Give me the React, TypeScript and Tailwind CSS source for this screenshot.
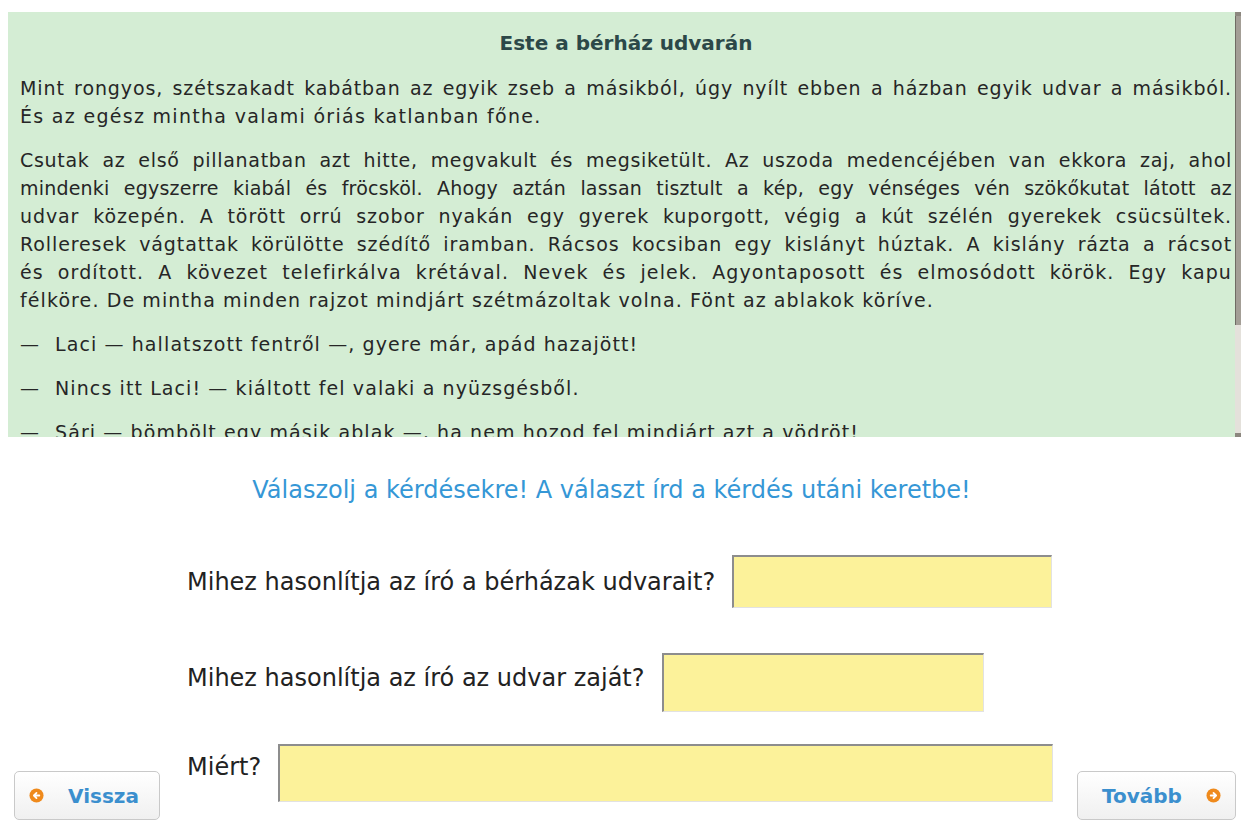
import React from "react";

// each justified line gets its own tracking so the word spacing stays close to the page
const para1 = [
  { t: "Mint rongyos, szétszakadt kabátban az egyik zseb a másikból, úgy nyílt ebben a házban egyik udvar a másikból.", k: "tracking-[0.9px]" },
];
const para1Last = "És az egész mintha valami óriás katlanban főne.";

const para2 = [
  { t: "Csutak az első pillanatban azt hitte, megvakult és megsiketült. Az uszoda medencéjében van ekkora zaj, ahol", k: "tracking-[0.7px]" },
  { t: "mindenki egyszerre kiabál és fröcsköl. Ahogy aztán lassan tisztult a kép, egy vénséges vén szökőkutat látott az", k: "tracking-[0.2px]" },
  { t: "udvar közepén. A törött orrú szobor nyakán egy gyerek kuporgott, végig a kút szélén gyerekek csücsültek.", k: "tracking-[0.9px]" },
  { t: "Rolleresek vágtattak körülötte szédítő iramban. Rácsos kocsiban egy kislányt húztak. A kislány rázta a rácsot", k: "tracking-[0.9px]" },
  { t: "és ordított. A kövezet telefirkálva krétával. Nevek és jelek. Agyontaposott és elmosódott körök. Egy kapu", k: "tracking-[1.1px]" },
];
const para2Last =
  "félköre. De mintha minden rajzot mindjárt szétmázoltak volna. Fönt az ablakok köríve.";

const dialog = [
  "Laci — hallatszott fentről —, gyere már, apád hazajött!",
  "Nincs itt Laci! — kiáltott fel valaki a nyüzsgésből.",
  "Sári — bömbölt egy másik ablak —, ha nem hozod fel mindjárt azt a vödröt!",
  "Nem vagyok itthon! — visította egy lány a kút mellől.",
];

const questions = [
  { text: "Mihez hasonlítja az író a bérházak udvarait?", box: "w-[320px] h-[53px]", gap: "", lift: "mt-0" },
  { text: "Mihez hasonlítja az író az udvar zaját?", box: "w-[322px] h-[59px]", gap: "mt-[45px]", lift: "-mt-[10px]" },
  { text: "Miért?", box: "w-[778px] h-[58px]", gap: "mt-[32px]", lift: "-mt-[12px]" },
];

const ArrowDot = ({ dir }: { dir: "left" | "right" }) => (
  <svg width="15" height="15" viewBox="0 0 16 16" className="shrink-0">
    <circle cx="8" cy="8" r="7.5" fill="#ef8a1c" />
    {dir === "left" ? (
      <path d="M11 8H5.5M8 5.2L5.2 8 8 10.8" stroke="#fff" strokeWidth="1.9" fill="none" strokeLinecap="round" strokeLinejoin="round" />
    ) : (
      <path d="M5 8h5.5M8 5.2L10.8 8 8 10.8" stroke="#fff" strokeWidth="1.9" fill="none" strokeLinecap="round" strokeLinejoin="round" />
    )}
  </svg>
);

const App = () => {
  return (
    <div className="w-[1250px] h-[834px] bg-white overflow-hidden font-['DejaVu_Sans',sans-serif] pt-[12px]">
      {/* reading box */}
      <div className="ml-[8px] w-[1233px] h-[425px] bg-[#d4edd4] flex">
        <div className="flex-1 overflow-hidden pl-[12px] pr-[3px] pt-[17px] text-[19px] leading-[28px] text-[#262626]">
          <h1 className="text-center font-bold text-[20px] text-[#2c4848] mb-[17px]">
            Este a bérház udvarán
          </h1>
          <div className="mb-[16px]">
            {para1.map((l) => (
              <div key={l.t} className={`text-justify [text-align-last:justify] whitespace-nowrap ${l.k}`}>
                {l.t}
              </div>
            ))}
            <div className="tracking-[1.3px]">{para1Last}</div>
          </div>
          <div className="mb-[16px]">
            {para2.map((l) => (
              <div key={l.t} className={`text-justify [text-align-last:justify] whitespace-nowrap ${l.k}`}>
                {l.t}
              </div>
            ))}
            <div className="tracking-[1.1px]">{para2Last}</div>
          </div>
          {dialog.map((l) => (
            <div key={l} className="mb-[16px] flex tracking-[1.1px] whitespace-nowrap">
              <span className="w-[35px] shrink-0 tracking-normal">—</span>
              <span>{l}</span>
            </div>
          ))}
        </div>
        {/* thin scrollbar */}
        <div className="w-[6px] flex flex-col bg-[#dcd9d2]">
          <div className="h-[4px] bg-[#8c877f]" />
          <div className="h-[309px] bg-[#a39e96] border-l border-[#6f6b64]" />
          <div className="flex-1 bg-[#e4e1db]" />
          <div className="h-[4px] bg-[#8c877f]" />
        </div>
      </div>

      {/* instruction */}
      <p className="mt-[38px] pr-[27px] text-center text-[24px] leading-[30px] text-[#3597d6]">
        Válaszolj a kérdésekre! A választ írd a kérdés utáni keretbe!
      </p>

      <div className="flex items-end px-[14px]">
        <button className="w-[146px] h-[49px] flex items-center pl-[14px] gap-[24px] rounded-[5px] border border-[#c9c9c9] bg-gradient-to-b from-white to-[#f0f0f0] text-[20px] font-bold text-[#3b8fce]">
          <ArrowDot dir="left" />
          <span>Vissza</span>
        </button>

        <div className="ml-[27px] w-[866px] pt-[50px] pb-[18px] text-[24px] text-[#222]">
          {questions.map((q) => (
            <div key={q.text} className={`flex items-center gap-[17px] ${q.gap}`}>
              <span className={q.lift}>{q.text}</span>
              <div
                className={`${q.box} bg-[#fcf29a] border-t-2 border-l-2 border-b border-r border-t-[#8d8d8d] border-l-[#8d8d8d] border-b-[#e2e2e2] border-r-[#e2e2e2]`}
              />
            </div>
          ))}
        </div>

        <button className="ml-[24px] w-[159px] h-[49px] flex items-center pl-[24px] gap-[24px] rounded-[5px] border border-[#c9c9c9] bg-gradient-to-b from-white to-[#f0f0f0] text-[20px] font-bold text-[#3b8fce]">
          <span>Tovább</span>
          <ArrowDot dir="right" />
        </button>
      </div>
    </div>
  );
};

export default App;
